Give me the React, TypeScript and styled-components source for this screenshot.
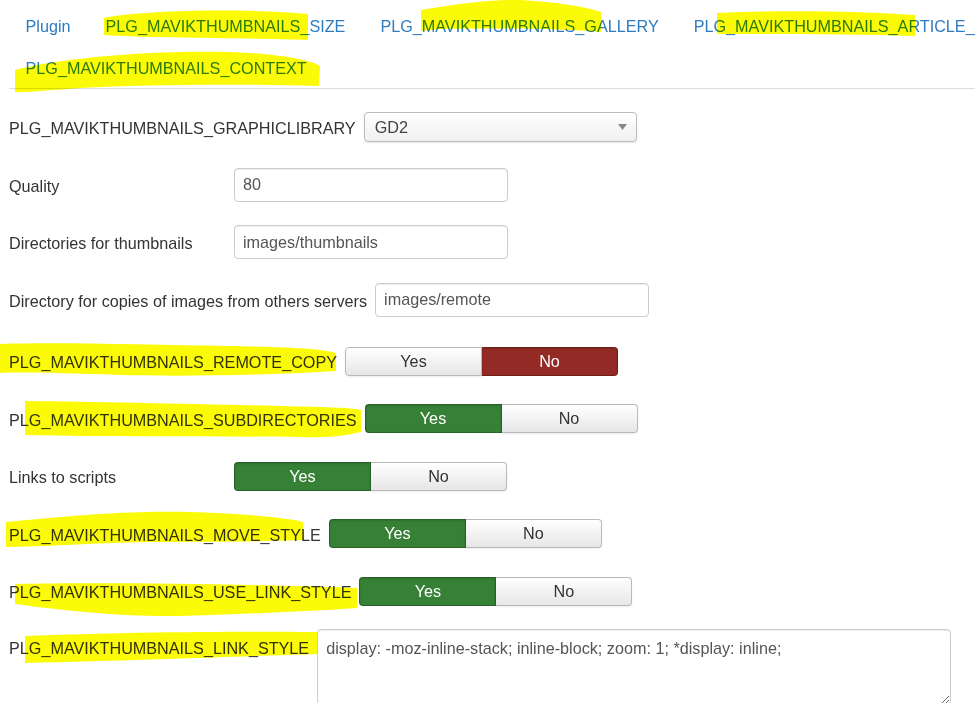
import React from 'react';
import styled, { createGlobalStyle } from 'styled-components';

const GlobalStyle = createGlobalStyle`
  html, body {
    margin: 0;
    padding: 0;
    background: #fff;
  }
  body {
    font-family: "Liberation Sans", Arial, Helvetica, sans-serif;
    font-size: 16.2px;
    color: #333;
  }
`;

const Page = styled.div`
  position: relative;
  width: 975px;
  height: 703px;
  overflow: hidden;
`;

const Tabs = styled.ul`
  display: flex;
  flex-wrap: wrap;
  width: 1150px;
  margin: 0 0 0 9px;
  padding: 4px 0 0;
  list-style: none;
  border-bottom: 1px solid #ddd;
`;

const TabLink = styled.a`
  display: block;
  padding: 12.5px 18.5px 11.5px 16.5px;
  line-height: 18px;
  color: #2d7cc1;
  text-decoration: none;
  white-space: nowrap;
`;

const Form = styled.div`
  display: flex;
  flex-direction: column;
  gap: 17.5px;
  padding: 18px 0 0 9px;
`;

const Row = styled.div<{ $top?: boolean; $extra?: number }>`
  display: flex;
  align-items: ${(p) => (p.$top ? 'flex-start' : 'center')};
  gap: 8px;
  min-height: 40px;
  margin-top: ${(p) => p.$extra ?? 0}px;
`;

const Label = styled.label<{ $top?: boolean }>`
  min-width: 217px;
  padding-top: ${(p) => (p.$top ? 9 : 2)}px;
  line-height: 20px;
  white-space: nowrap;
  color: #333;
`;

const SelectBox = styled.div`
  display: flex;
  align-items: center;
  justify-content: space-between;
  box-sizing: border-box;
  width: 273px;
  height: 30px;
  padding: 0 9px 0 10px;
  border: 1px solid #bbb;
  border-radius: 4px;
  background: linear-gradient(#fff, #f0f0f0);
  box-shadow: 0 1px 2px rgba(0, 0, 0, 0.1);
  color: #444;
`;

const TextInput = styled.input`
  box-sizing: border-box;
  width: 274px;
  height: 34px;
  padding: 0 8px;
  border: 1px solid #ccc;
  border-radius: 4px;
  box-shadow: inset 0 1px 1px rgba(0, 0, 0, 0.075);
  font: 16.2px "Liberation Sans", Arial, sans-serif;
  color: #555;
  outline: none;
`;

const TextArea = styled.textarea`
  box-sizing: border-box;
  width: 634px;
  height: 76px;
  padding: 8px;
  border: 1px solid #ccc;
  border-radius: 4px;
  box-shadow: inset 0 1px 1px rgba(0, 0, 0, 0.075);
  font: 16.2px/20px "Liberation Sans", Arial, sans-serif;
  color: #555;
  outline: none;
`;

const ToggleGroup = styled.div`
  display: flex;
  width: 273px;
  height: 29px;
`;

type Tone = 'success' | 'danger' | 'plain';

const toneBg: Record<Tone, string> = {
  success: '#378137',
  danger: '#942a25',
  plain: 'linear-gradient(#fff, #e6e6e6)',
};

const ToggleButton = styled.button<{ $tone: Tone }>`
  flex: 1;
  margin: 0;
  padding: 0;
  border: 1px solid ${(p) => (p.$tone === 'plain' ? '#b9b9b9' : 'rgba(0,0,0,0.25)')};
  background: ${(p) => toneBg[p.$tone]};
  color: ${(p) => (p.$tone === 'plain' ? '#333' : '#fff')};
  font: 16.2px "Liberation Sans", Arial, sans-serif;
  box-shadow: ${(p) =>
    p.$tone === 'plain' ? '0 1px 2px rgba(0,0,0,0.08)' : 'inset 0 1px 2px rgba(0,0,0,0.15)'};

  &:first-child {
    border-radius: 4px 0 0 4px;
  }
  &:last-child {
    border-radius: 0 4px 4px 0;
    border-left: none;
  }
`;

const Marker = styled.svg`
  position: absolute;
  left: 0;
  top: 0;
  pointer-events: none;
  mix-blend-mode: multiply;
`;

const tabs = [
  'Plugin',
  'PLG_MAVIKTHUMBNAILS_SIZE',
  'PLG_MAVIKTHUMBNAILS_GALLERY',
  'PLG_MAVIKTHUMBNAILS_ARTICLE_IMAGES',
  'PLG_MAVIKTHUMBNAILS_CONTEXT',
];

type Field =
  | { kind: 'select'; label: string; value: string }
  | { kind: 'input'; label: string; value: string }
  | { kind: 'toggle'; label: string; on: boolean; extra?: number }
  | { kind: 'textarea'; label: string; value: string };

const fields: Field[] = [
  { kind: 'select', label: 'PLG_MAVIKTHUMBNAILS_GRAPHICLIBRARY', value: 'GD2' },
  { kind: 'input', label: 'Quality', value: '80' },
  { kind: 'input', label: 'Directories for thumbnails', value: 'images/thumbnails' },
  { kind: 'input', label: 'Directory for copies of images from others servers', value: 'images/remote' },
  { kind: 'toggle', label: 'PLG_MAVIKTHUMBNAILS_REMOTE_COPY', on: false, extra: 4 },
  { kind: 'toggle', label: 'PLG_MAVIKTHUMBNAILS_SUBDIRECTORIES', on: true },
  { kind: 'toggle', label: 'Links to scripts', on: true },
  { kind: 'toggle', label: 'PLG_MAVIKTHUMBNAILS_MOVE_STYLE', on: true },
  { kind: 'toggle', label: 'PLG_MAVIKTHUMBNAILS_USE_LINK_STYLE', on: true },
  {
    kind: 'textarea',
    label: 'PLG_MAVIKTHUMBNAILS_LINK_STYLE',
    value: 'display: -moz-inline-stack; inline-block; zoom: 1; *display: inline;',
  },
];

// hand-drawn highlighter strokes over the page
const strokes = [
  'M104,18 C140,10 250,8 308,14 L308,40 C250,38 150,38 104,35 Z',
  'M15,70 C60,58 150,50 230,52 C280,54 310,60 320,66 L319,86 C250,84 150,84 80,88 C50,90 25,93 15,92 Z',
  'M421,10 C460,3 500,-1 520,0 C560,2 590,8 601,12 L601,32 C560,28 480,28 440,29 L421,31 Z',
  'M717,13 C780,10 860,11 915,15 L915,36 C850,34 780,34 717,34 Z',
  'M0,344 C60,342 150,345 230,346 C290,347 325,349 336,353 L336,371 C290,374 200,377 120,375 C60,373 20,372 0,373 Z',
  'M25,401 C100,402 200,404 280,406 C330,407 355,408 361,410 L361,432 C340,437 320,438 300,437 C220,436 120,437 25,435 Z',
  'M6,522 C50,518 120,510 190,512 C250,514 290,518 303,522 L303,540 C250,542 200,542 150,542 C90,543 40,547 6,547 Z',
  'M15,584 C100,582 250,584 357,588 L357,608 C300,612 240,614 180,616 C120,617 60,610 15,604 Z',
  'M25,636 C120,632 240,631 317,632 L317,654 C250,656 150,660 25,663 Z',
];

const Caret = () => (
  <svg width="9" height="6" viewBox="0 0 9 6">
    <path d="M0 0 H9 L4.5 6 Z" fill="#888" />
  </svg>
);

const Control: React.FC<{ field: Field }> = ({ field }) => {
  switch (field.kind) {
    case 'select':
      return (
        <SelectBox>
          <span>{field.value}</span>
          <Caret />
        </SelectBox>
      );
    case 'input':
      return <TextInput defaultValue={field.value} />;
    case 'textarea':
      return <TextArea defaultValue={field.value} />;
    case 'toggle':
      return (
        <ToggleGroup>
          <ToggleButton $tone={field.on ? 'success' : 'plain'}>Yes</ToggleButton>
          <ToggleButton $tone={field.on ? 'plain' : 'danger'}>No</ToggleButton>
        </ToggleGroup>
      );
  }
};

export default function App() {
  return (
    <Page>
      <GlobalStyle />
      <Tabs>
        {tabs.map((t) => (
          <li key={t}>
            <TabLink href="#">{t}</TabLink>
          </li>
        ))}
      </Tabs>
      <Form>
        {fields.map((f) => {
          const top = f.kind === 'textarea';
          return (
            <Row key={f.label} $top={top} $extra={f.kind === 'toggle' ? f.extra : 0}>
              <Label $top={top}>{f.label}</Label>
              <Control field={f} />
            </Row>
          );
        })}
      </Form>
      <Marker width="975" height="703" viewBox="0 0 975 703">
        {strokes.map((d, i) => (
          <path key={i} d={d} fill="#fbfb08" />
        ))}
      </Marker>
    </Page>
  );
}
